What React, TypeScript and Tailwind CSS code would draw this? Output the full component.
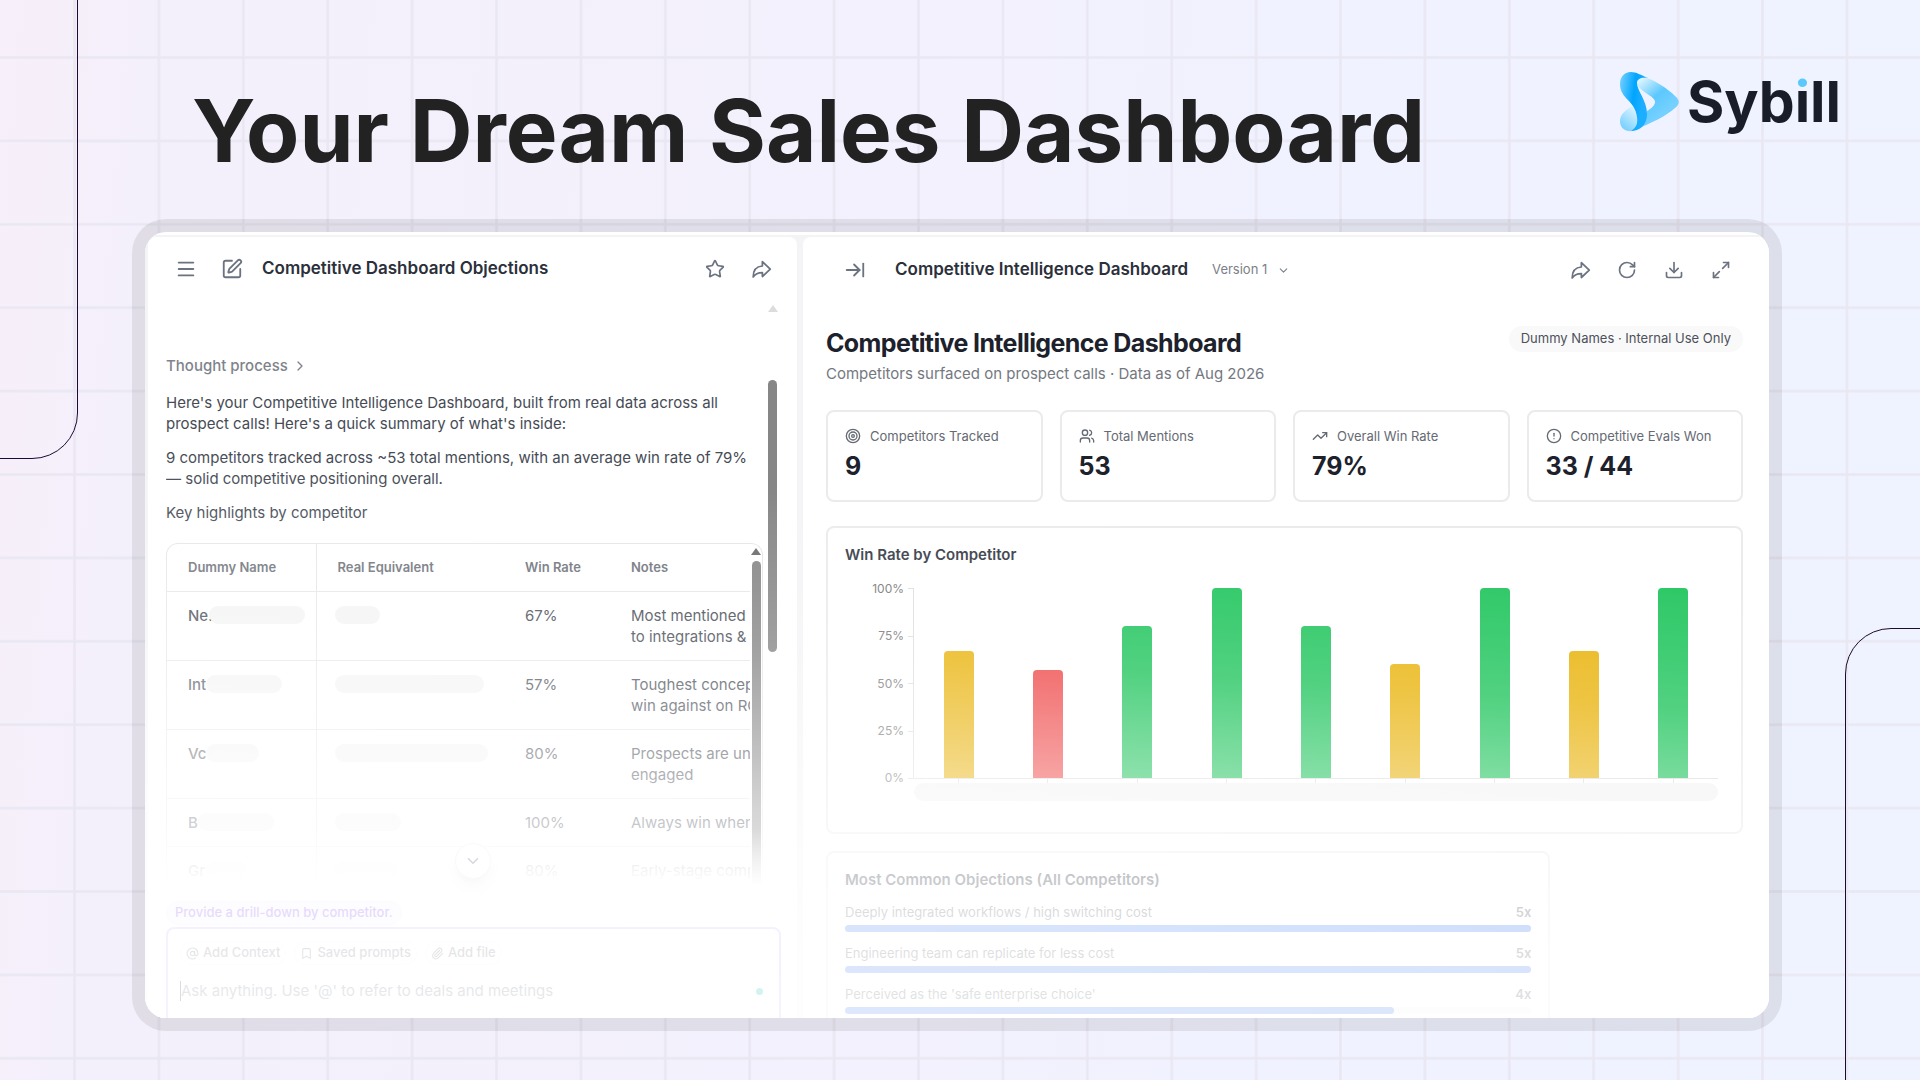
import type { ReactNode } from "react"
import {
    ArrowRightToLine, AtSign, Bookmark, ChevronDown, ChevronRight, CircleAlert, Download,
    Maximize2, Menu, Paperclip, RotateCw, SquarePen, Star, Target, TrendingUp, Users,
} from "lucide-react"

// the masks cover the competitor names
const rows = [
    { name: "Ne.", mask: "left-[42px] w-24", real: "w-[45px]", rate: "67%", notes: ["Most mentioned", "to integrations &"] },
    { name: "Int", mask: "left-[39px] w-[76px]", real: "w-[149px]", rate: "57%", notes: ["Toughest concept", "win against on ROI"] },
    { name: "Vc", mask: "left-[39px] w-[53px]", real: "w-[153px]", rate: "80%", notes: ["Prospects are unde", "engaged"] },
    { name: "B", mask: "left-[31px] w-[76px]", real: "w-[66px]", rate: "100%", notes: ["Always win when"] },
    { name: "Gr", mask: "left-[39px] w-10", real: "w-[63px]", rate: "80%", notes: ["Early-stage comp"] },
]

const stats = [
    { label: "Competitors Tracked", value: "9", icon: Target },
    { label: "Total Mentions", value: "53", icon: Users },
    { label: "Overall Win Rate", value: "79%", icon: TrendingUp },
    { label: "Competitive Evals Won", value: "33 / 44", icon: CircleAlert },
]

const bars = [67, 57, 80, 100, 80, 60, 100, 67, 100]

const objections = [
    { label: "Deeply integrated workflows / high switching cost", count: 5 },
    { label: "Engineering team can replicate for less cost", count: 5 },
    { label: "Perceived as the 'safe enterprise choice'", count: 4 },
]

function barColor(rate: number) {
    if (rate >= 80) return "bg-[#22c55e]"
    if (rate >= 60) return "bg-[#e9b40f]"
    return "bg-[#ef4848]"
}

function IconButton({ label, children }: { label: string; children: ReactNode }) {
    return (
        <button type="button" aria-label={label} className="flex size-6 items-center justify-center text-[#6b7280]">
            {children}
        </button>
    )
}

function ShareIcon() {
    return (
        <svg viewBox="0 0 24 24" className="size-[21px]" fill="none" stroke="currentColor" strokeWidth="2" strokeLinejoin="round" aria-hidden="true">
            <path d="M13 3L22 11.5L13 20V15.5C8 15.5 5 16.5 2.5 20.5C2.5 13.5 6 8.5 13 8Z" />
        </svg>
    )
}

function Backdrop() {
    return (
        <div className="absolute inset-0 -z-10 overflow-hidden bg-[linear-gradient(95deg,#f7effa_0%,#f4f0fb_8%,#f3f1fd_45%,#f0f2ff_70%,#eff3ff_100%)]">
            <svg className="size-full" aria-hidden="true">
                <defs>
                    <pattern id="grid" x="73" y="56" width="84.4" height="83.4" patternUnits="userSpaceOnUse">
                        <path d="M1.5 0V84M0 1.5H85" stroke="#e9e7f2" strokeWidth="2.5" fill="none" />
                    </pattern>
                </defs>
                <rect width="100%" height="100%" fill="url(#grid)" />
            </svg>
            <div className="absolute -top-px -left-px h-[460px] w-[79px] rounded-br-[46px] border border-[#1d0b35]" />
            <div className="absolute top-[628px] -right-px -bottom-px w-[76px] rounded-tl-[46px] border border-[#1d0b2b]" />
        </div>
    )
}

function Logo() {
    return (
        <a href="#" aria-label="Sybill" className="flex items-center gap-2 pt-[66px]">
            <svg viewBox="0 0 59 60" className="w-[59px]" aria-hidden="true">
                <defs>
                    <linearGradient id="play" x1="0.1" y1="0" x2="0.6" y2="0.7">
                        <stop offset="0" stopColor="#eefaff" />
                        <stop offset="0.6" stopColor="#5cc8ff" />
                        <stop offset="1" stopColor="#74d0ff" />
                    </linearGradient>
                    <linearGradient id="tail" x1="0.8" y1="0" x2="0.2" y2="1">
                        <stop offset="0" stopColor="#e2f5ff" />
                        <stop offset="1" stopColor="#6fcdff" />
                    </linearGradient>
                    <linearGradient id="ribbon" x1="0" y1="0.25" x2="0.8" y2="0.5">
                        <stop offset="0" stopColor="#6accff" />
                        <stop offset="0.6" stopColor="#00a5ff" />
                        <stop offset="1" stopColor="#1caeff" />
                    </linearGradient>
                </defs>
                <path d="M17 10C17 6 20 4 27 6C36 9 48 17 55 24C60 28 60 32 55 36C46 44 32 51 14 58C20 54 26 48 27 39C32 36 35 33 35 30C35 27 32 25 26 21C20 17 17 14 17 10Z" fill="url(#play)" />
                <path d="M12 34C6 38 0 42 0 49C0 56 5 60 13 59C20 54 19 43 12 34Z" fill="url(#tail)" />
                <path d="M28 6C21 3 16 0 11 0C4 0 0 5 0 12C0 27 15 28 17 45C18 52 16 56 11 59C19 59 27 54 27 42C27 28 17 19 17 11C17 7 21 5 28 6Z" fill="url(#ribbon)" />
            </svg>
            <span className="text-[57px] leading-[72px] font-bold text-[#191c29]">
                Syb
                <span className="bg-[linear-gradient(#5ac8fa_24px,#191c29_24px)] bg-clip-text text-transparent">i</span>
                ll
            </span>
        </a>
    )
}

function ChatPanel() {
    return (
        <section className="flex w-[649px] shrink-0 flex-col overflow-hidden rounded-t-lg bg-white">
            <header className="flex h-16 shrink-0 items-center pr-6 pl-[26px]">
                <IconButton label="Menu"><Menu size={22} strokeWidth={2} /></IconButton>
                <div className="ml-[22px] flex items-center gap-[18px]">
                    <IconButton label="New chat"><SquarePen size={22} strokeWidth={2} /></IconButton>
                    <h2 className="text-[17px] font-semibold text-[#2b303b]">Competitive Dashboard Objections</h2>
                </div>
                <div className="ml-auto flex gap-[22px]">
                    <IconButton label="Favourite"><Star size={20} /></IconButton>
                    <IconButton label="Share"><ShareIcon /></IconButton>
                </div>
            </header>

            <div className="relative flex min-h-0 flex-1 pr-[19px] pl-[18px]">
                <div className="min-w-0 flex-1 overflow-hidden pt-[54px] text-[15px] leading-[21px] text-[#464b55]">
                    <button type="button" className="flex items-center gap-1 font-medium text-[#7f838c]">
                        Thought process <ChevronRight size={16} />
                    </button>
                    <p className="mt-4 w-[590px]">
                        Here's your Competitive Intelligence Dashboard, built from real data across all prospect calls! Here's a quick summary of what's inside:
                    </p>
                    <p className="mt-[13px] w-[590px]">
                        9 competitors tracked across ~53 total mentions, with an average win rate of 79% — solid competitive positioning overall.
                    </p>
                    <p className="mt-[13px]">Key highlights by competitor</p>

                    <div className="mt-5 flex w-[597px] rounded-t-xl border border-b-0 border-[#e6e6e8]">
                        <div className="min-w-0 flex-1 overflow-hidden">
                            <table className="w-[700px] table-fixed text-left">
                                <thead>
                                    <tr className="border-b border-[#e6e6e8] text-[13px] text-[#6e727a]">
                                        <th className="w-[149px] border-r border-[#e6e6e8] py-[13px] pl-[21px] font-semibold">Dummy Name</th>
                                        <th className="w-[188px] pl-[21px] font-semibold">Real Equivalent</th>
                                        <th className="w-[106px] pl-[21px] font-semibold">Win Rate</th>
                                        <th className="pl-[21px] font-semibold">Notes</th>
                                    </tr>
                                </thead>
                                <tbody>
                                    {rows.map((row) => (
                                        <tr key={row.name} className="border-b border-[#e6e6e8] align-top">
                                            <td className="relative border-r border-[#e6e6e8] py-[13px] pl-[21px] font-medium">
                                                {row.name}
                                                <span className={`absolute top-[14px] h-[18px] rounded-full bg-[#f4f4f5] ${row.mask}`} />
                                            </td>
                                            <td className="pt-[14px] pl-[18px]">
                                                <span className={`block h-[18px] rounded-full bg-[#f4f4f5] ${row.real}`} />
                                            </td>
                                            <td className="py-[13px] pl-[21px]">{row.rate}</td>
                                            <td className="py-[13px] pl-[21px] whitespace-nowrap">
                                                {row.notes.map((line) => <div key={line}>{line}</div>)}
                                            </td>
                                        </tr>
                                    ))}
                                </tbody>
                            </table>
                        </div>
                        <div className="flex w-3 flex-col items-center pt-1">
                            <span className="border-x-[5px] border-b-[7px] border-x-transparent border-b-[#6b6b6b]" />
                            <span className="mt-[6px] w-[9px] flex-1 rounded-t-full bg-[#868686]" />
                        </div>
                    </div>
                </div>
                <div className="flex w-[11px] shrink-0 flex-col items-center pt-1">
                    <span className="border-x-[5px] border-b-[7px] border-x-transparent border-b-[#dcdcdc]" />
                    <span className="mt-[68px] h-[272px] w-[9px] rounded-full bg-[#868686]" />
                </div>
                <div className="pointer-events-none absolute inset-x-0 bottom-0 h-14 bg-linear-to-b from-white/0 to-white" />
                <button type="button" aria-label="Scroll to bottom" className="absolute bottom-[6px] left-[307px] flex size-9 items-center justify-center rounded-full border border-gray-200 bg-white text-gray-600 shadow-lg">
                    <ChevronDown size={18} />
                </button>
            </div>

            <div className="h-[133px] shrink-0 overflow-hidden pt-4 pr-4 pl-[18px] text-[13px] font-medium">
                <button type="button" className="flex h-6 items-center rounded-full border border-violet-100 bg-violet-50 px-2 text-[#7c3aed]">
                    Provide a drill-down by competitor.
                </button>
                <form className="mt-[2px] h-36 rounded-lg border-2 border-[#c9b5fb] px-3 pt-3">
                    <div className="flex gap-2 text-gray-500">
                        <button type="button" className="flex h-6 items-center gap-1 rounded-full border border-gray-100 px-[5px]">
                            <AtSign size={13} /> Add Context
                        </button>
                        <button type="button" className="flex h-6 items-center gap-1 rounded-full border border-gray-100 px-[5px]">
                            <Bookmark size={13} /> Saved prompts
                        </button>
                        <button type="button" className="flex h-6 items-center gap-1 rounded-full border border-gray-100 px-[5px]">
                            <Paperclip size={13} /> Add file
                        </button>
                    </div>
                    <div className="mt-[15px] flex items-center pr-1">
                        <span className="h-5 w-px bg-gray-800" />
                        <input
                            type="text"
                            aria-label="Ask anything"
                            placeholder="Ask anything. Use '@' to refer to deals and meetings"
                            className="flex-1 text-[15px] font-normal outline-none placeholder:text-gray-500"
                        />
                        <span className="size-[7px] rounded-full bg-teal-500" />
                    </div>
                </form>
            </div>
        </section>
    )
}

function WinRateChart() {
    return (
        <section className="mt-6 h-[308px] rounded-lg border-2 border-[#ebebec] px-[17px] pt-4">
            <h3 className="text-[15px] leading-[22px] font-semibold text-[#363b47]">Win Rate by Competitor</h3>
            <div className="mt-[22px] mr-[6px] flex">
                <div className="flex h-[191px] w-[59px] flex-col justify-between text-right text-xs leading-[2px] text-[#777777]">
                    {["100%", "75%", "50%", "25%", "0%"].map((tick) => <span key={tick}>{tick}</span>)}
                </div>
                <div className="ml-1 flex h-[191px] w-[6px] flex-col justify-between border-r border-[#dddddd]">
                    {[100, 75, 50, 25, 0].map((tick) => <span key={tick} className="h-px bg-[#dddddd]" />)}
                </div>
                <div className="flex-1">
                    <div className="flex h-[191px] border-b border-[#dddddd]">
                        {bars.map((rate, i) => (
                            <div key={i} className="flex flex-1 items-end justify-center">
                                <div className={`w-[30px] rounded-t ${barColor(rate)}`} style={{ height: `${rate}%` }} />
                            </div>
                        ))}
                    </div>
                    <div className="flex">
                        {bars.map((_, i) => (
                            <div key={i} className="flex flex-1 justify-center">
                                <span className="h-1 w-px bg-[#dddddd]" />
                            </div>
                        ))}
                    </div>
                    <div className="h-[18px] rounded-full bg-[#f3f3f3]" />
                </div>
            </div>
        </section>
    )
}

function DashboardPanel() {
    return (
        <section className="flex min-w-0 flex-1 flex-col overflow-hidden rounded-tl-lg bg-white">
            <header className="flex h-[66px] shrink-0 items-center pr-9 pl-10">
                <IconButton label="Collapse"><ArrowRightToLine size={22} /></IconButton>
                <h2 className="ml-7 text-[17px] font-semibold text-[#2b303b]">Competitive Intelligence Dashboard</h2>
                <button type="button" className="ml-6 flex items-center gap-[10px] text-[13px] text-[#7c8088]">
                    Version 1 <ChevronDown size={13} />
                </button>
                <div className="ml-auto flex gap-[23px]">
                    <IconButton label="Share"><ShareIcon /></IconButton>
                    <IconButton label="Refresh"><RotateCw size={20} /></IconButton>
                    <IconButton label="Download"><Download size={20} /></IconButton>
                    <IconButton label="Expand"><Maximize2 size={20} /></IconButton>
                </div>
            </header>

            <div className="pt-[23px] pr-[26px] pl-[23px]">
                <div className="flex items-start justify-between">
                    <div>
                        <h1 className="text-[25px] leading-[34px] font-bold tracking-tight text-[#1c212c]">Competitive Intelligence Dashboard</h1>
                        <p className="mt-[3px] text-[15px] leading-[22px] text-[#747881]">Competitors surfaced on prospect calls · Data as of Aug 2026</p>
                    </div>
                    <span className="flex h-[26px] items-center rounded-full bg-[#f9f9f9] px-3 text-[13px] text-[#4c515b]">
                        Dummy Names · Internal Use Only
                    </span>
                </div>

                <div className="mt-[25px] grid grid-cols-4 gap-[17px]">
                    {stats.map(({ label, value, icon: Icon }) => (
                        <div key={label} className="h-[92px] rounded-lg border-2 border-[#ebebec] px-[17px] pt-[14px]">
                            <div className="flex items-center gap-[9px] text-[13px] leading-5 text-[#656a73]">
                                <Icon size={16} /> {label}
                            </div>
                            <div className="mt-1 text-[25px] leading-8 font-bold text-[#1c212c]">{value}</div>
                        </div>
                    ))}
                </div>

                <WinRateChart />

                <section className="mt-[17px] w-[79%] rounded-lg border-2 border-[#ebebec] px-[17px] pt-4 pb-4">
                    <h3 className="text-[15px] leading-[22px] font-semibold text-[#1f2937]">Most Common Objections (All Competitors)</h3>
                    {objections.map((item) => (
                        <div key={item.label} className="mt-[11px]">
                            <div className="flex justify-between text-[13px] leading-5 text-[#555a63]">
                                <span>{item.label}</span>
                                <span className="font-semibold">{item.count}x</span>
                            </div>
                            <div className="mt-[3px] h-[7px] rounded-full bg-gray-100">
                                <div className="h-[7px] rounded-full bg-[#3b78f0]" style={{ width: `${item.count * 20}%` }} />
                            </div>
                        </div>
                    ))}
                </section>
            </div>
        </section>
    )
}

export default function App() {
    return (
        <main className="relative isolate flex h-screen flex-col overflow-hidden pb-[49px] font-[Inter,sans-serif]">
            <Backdrop />
            <div className="flex h-[219px] shrink-0 items-start justify-between pr-[79px] pl-48">
                <div className="pt-[81px] text-[87px] leading-[100px] font-bold text-[#222222]">Your Dream Sales Dashboard</div>
                <Logo />
            </div>

            <div className="mr-[138px] ml-[132px] flex min-h-0 flex-1 rounded-[34px] bg-black/8 p-[13px]">
                <div className="relative flex min-w-0 flex-1 overflow-hidden rounded-[21px] bg-white pt-[3px]">
                    <div className="flex min-w-0 flex-1 gap-[6px] bg-[#f4f4f6] pt-[2px] pl-[3px]">
                        <ChatPanel />
                        <DashboardPanel />
                    </div>
                    {/* white fade towards the bottom */}
                    <div className="pointer-events-none absolute inset-0 bg-[linear-gradient(184deg,rgba(255,255,255,0)_36%,rgba(255,255,255,.08)_42%,rgba(255,255,255,.14)_48%,rgba(255,255,255,.22)_54%,rgba(255,255,255,.47)_65%,rgba(255,255,255,.65)_72%,rgba(255,255,255,.75)_78%,rgba(255,255,255,.8)_83%,rgba(255,255,255,.84)_96%)]" />
                </div>
            </div>
        </main>
    )
}
